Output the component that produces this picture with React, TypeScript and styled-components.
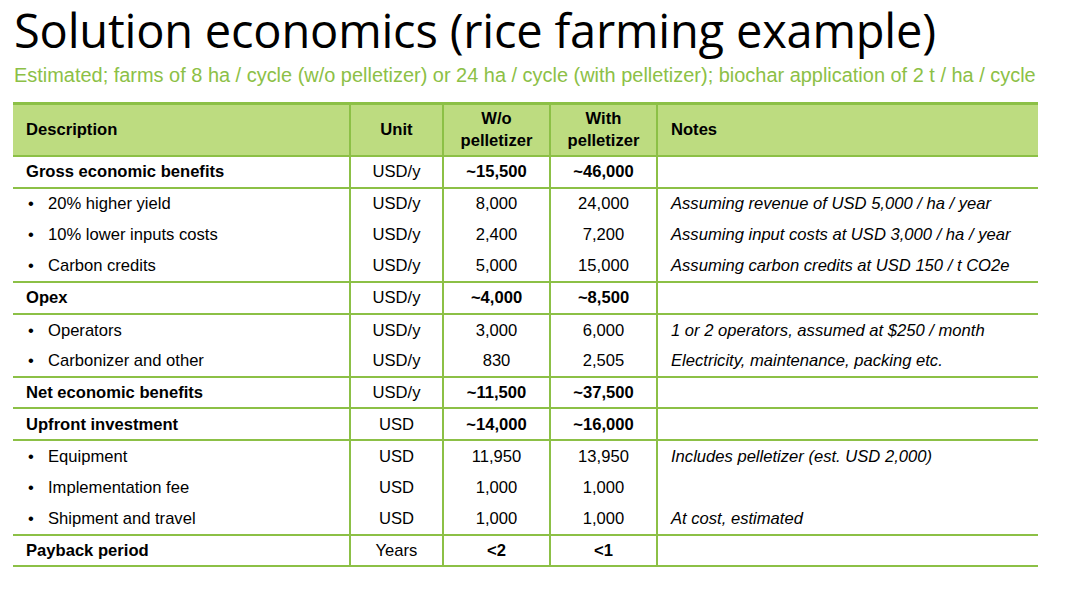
import React from "react";
import styled, { createGlobalStyle } from "styled-components";

const Global = createGlobalStyle`
  html, body { margin: 0; padding: 0; background: #fff; }
`;

const Page = styled.div`
  width: 1081px;
  height: 592px;
  padding: 0 0 0 13px;
  box-sizing: border-box;
  display: flex;
  flex-direction: column;
`;

const Title = styled.h1`
  margin: 0;
  padding: 2px 0 0 1px;
  font-family: "Open Sans", "Noto Sans", sans-serif;
  font-weight: 400;
  font-size: 47px;
  line-height: 56px;
  color: #000;
  letter-spacing: -0.2px;
`;

const Subtitle = styled.div`
  margin: 5px 0 0 1px;
  font-family: "Liberation Sans", Arial, sans-serif;
  font-size: 19.95px;
  line-height: 24px;
  color: #8cc046;
  white-space: nowrap;
`;

const Table = styled.table`
  margin-top: 15px;
  width: 1025px;
  table-layout: fixed;
  border-collapse: collapse;
  font-family: "Liberation Sans", Arial, sans-serif;
  font-size: 16.6px;
  color: #000;
  border-top: 3px solid #8cc046;
`;

const HeadCell = styled.th<{ $align?: string }>`
  background: #bddc80;
  height: 50px;
  padding: 0;
  padding-left: ${(p) => (p.$align === "left" ? "13px" : "0")};
  text-align: ${(p) => p.$align || "center"};
  font-weight: 700;
  line-height: 22px;
  border-bottom: 2px solid #8cc046;
  border-left: 2px solid #8cc046;
  &:first-child { border-left: none; }
`;

const Row = styled.tr<{ $line?: boolean }>`
  height: 31.55px;
  ${(p) => (p.$line ? "border-bottom: 2px solid #8cc046;" : "")}
`;

const Cell = styled.td<{ $align?: string; $bold?: boolean; $italic?: boolean }>`
  padding: 1px 0 0;
  padding-left: ${(p) => (p.$align === "left" ? "13px" : "0")};
  text-align: ${(p) => p.$align || "center"};
  font-weight: ${(p) => (p.$bold ? 700 : 400)};
  font-style: ${(p) => (p.$italic ? "italic" : "normal")};
  border-left: 2px solid #8cc046;
  white-space: nowrap;
  &:first-child { border-left: none; }
`;

const Bullet = styled.span`
  display: inline-block;
  width: 20px;
  padding-left: 2px;
`;

type R = {
  d: string;
  sub?: boolean;
  unit: string;
  a: string;
  b: string;
  n?: string;
  line?: boolean;
};

const rows: R[] = [
  { d: "Gross economic benefits", unit: "USD/y", a: "~15,500", b: "~46,000", line: true },
  { d: "20% higher yield", sub: true, unit: "USD/y", a: "8,000", b: "24,000", n: "Assuming revenue of USD 5,000 / ha / year" },
  { d: "10% lower inputs costs", sub: true, unit: "USD/y", a: "2,400", b: "7,200", n: "Assuming input costs at USD 3,000 / ha / year" },
  { d: "Carbon credits", sub: true, unit: "USD/y", a: "5,000", b: "15,000", n: "Assuming carbon credits at USD 150 / t CO2e", line: true },
  { d: "Opex", unit: "USD/y", a: "~4,000", b: "~8,500", line: true },
  { d: "Operators", sub: true, unit: "USD/y", a: "3,000", b: "6,000", n: "1 or 2 operators, assumed at $250 / month" },
  { d: "Carbonizer and other", sub: true, unit: "USD/y", a: "830", b: "2,505", n: "Electricity, maintenance, packing etc.", line: true },
  { d: "Net economic benefits", unit: "USD/y", a: "~11,500", b: "~37,500", line: true },
  { d: "Upfront investment", unit: "USD", a: "~14,000", b: "~16,000", line: true },
  { d: "Equipment", sub: true, unit: "USD", a: "11,950", b: "13,950", n: "Includes pelletizer (est. USD 2,000)" },
  { d: "Implementation fee", sub: true, unit: "USD", a: "1,000", b: "1,000" },
  { d: "Shipment and travel", sub: true, unit: "USD", a: "1,000", b: "1,000", n: "At cost, estimated", line: true },
  { d: "Payback period", unit: "Years", a: "<2", b: "<1", line: true },
];

export default function App() {
  return (
    <Page>
      <Global />
      <Title>Solution economics (rice farming example)</Title>
      <Subtitle>
        Estimated; farms of 8 ha / cycle (w/o pelletizer) or 24 ha / cycle (with pelletizer); biochar application of 2 t / ha / cycle
      </Subtitle>
      <Table>
        <colgroup>
          <col style={{ width: 337 }} />
          <col style={{ width: 93 }} />
          <col style={{ width: 107 }} />
          <col style={{ width: 107 }} />
          <col style={{ width: 381 }} />
        </colgroup>
        <thead>
          <tr>
            <HeadCell $align="left">Description</HeadCell>
            <HeadCell>Unit</HeadCell>
            <HeadCell>W/o<br />pelletizer</HeadCell>
            <HeadCell>With<br />pelletizer</HeadCell>
            <HeadCell $align="left">Notes</HeadCell>
          </tr>
        </thead>
        <tbody>
          {rows.map((r) => (
            <Row key={r.d} $line={r.line}>
              <Cell $align="left" $bold={!r.sub}>
                {r.sub && <Bullet>•</Bullet>}
                {r.d}
              </Cell>
              <Cell>{r.unit}</Cell>
              <Cell $bold={!r.sub}>{r.a}</Cell>
              <Cell $bold={!r.sub}>{r.b}</Cell>
              <Cell $align="left" $italic>{r.n || ""}</Cell>
            </Row>
          ))}
        </tbody>
      </Table>
    </Page>
  );
}
